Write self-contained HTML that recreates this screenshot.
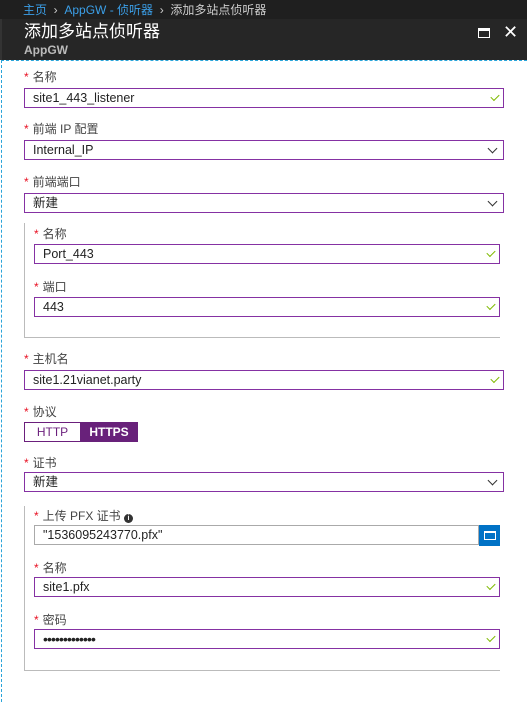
<!DOCTYPE html><html><head><meta charset="utf-8"><style>
*{margin:0;padding:0;box-sizing:border-box}
body{width:527px;height:702px;position:relative;background:#fff;font-family:"Liberation Sans","Noto Sans CJK SC",sans-serif;overflow:hidden;font-size:12px;color:#333}
.a{position:absolute}
.top{left:0;top:0;width:527px;height:19px;background:#1f1f1f;}
.hd{left:0;top:19px;width:527px;height:41px;background:#262626}
.lb{position:absolute;font-size:12px;color:#444;line-height:14px}
.lb:before{content:"*";color:#e81123;margin-right:4px;font-size:12px}
.in{position:absolute;border:1px solid #8531a3;height:20px;line-height:18px;padding-left:8px;font-size:12.5px;color:#222;background:#fff}
.ck{position:absolute;right:4px;top:5px;width:8px;height:5px;border-left:1.5px solid #7fba00;border-bottom:1.5px solid #7fba00;transform:rotate(-45deg)}
.dd{position:absolute;right:7px;top:4px;width:7px;height:7px;border-right:1px solid #333;border-bottom:1px solid #333;transform:rotate(45deg)}
</style></head><body>
<div class="a top"></div>
<div class="a" style="left:23px;top:3px;font-size:12px;line-height:14px;color:#ccc"><span style="color:#3b9fe8">主页</span> &nbsp;›&nbsp; <span style="color:#3b9fe8">AppGW - 侦听器</span> &nbsp;›&nbsp; 添加多站点侦听器</div>
<div class="a hd"></div>
<div class="a" style="left:0;top:19px;width:2px;height:41px;background:#333"></div>
<div class="a" style="left:24px;top:21px;font-size:17px;color:#fff;line-height:22px">添加多站点侦听器</div>
<div class="a" style="left:24px;top:43px;font-size:12px;color:#bbb;font-weight:bold;line-height:14px">AppGW</div>
<div class="a" style="left:478px;top:28px;width:12px;height:10px;border:1.5px solid #fff;border-top-width:3px"></div>
<div class="a" style="left:503px;top:22px;font-size:18px;color:#fff;line-height:20px">✕</div>
<div class="a" style="left:1px;top:60px;width:1px;height:642px;border-left:1px dashed #29a4d9"></div>
<div class="a" style="left:1px;top:60px;width:526px;height:1px;border-top:1px dashed #29a4d9"></div>

<div class="lb" style="left:24px;top:70px">名称</div>
<div class="in" style="left:24px;top:88px;width:480px">site1_443_listener<i class="ck"></i></div>
<div class="lb" style="left:24px;top:122px">前端 IP 配置</div>
<div class="in" style="left:24px;top:140px;width:480px">Internal_IP<i class="dd"></i></div>
<div class="lb" style="left:24px;top:175px">前端端口</div>
<div class="in" style="left:24px;top:193px;width:480px">新建<i class="dd"></i></div>

<div class="a" style="left:24px;top:223px;width:476px;height:115px;border-left:1px solid #bbb;border-bottom:1px solid #bbb"></div>
<div class="lb" style="left:34px;top:227px">名称</div>
<div class="in" style="left:34px;top:244px;width:466px">Port_443<i class="ck"></i></div>
<div class="lb" style="left:34px;top:280px">端口</div>
<div class="in" style="left:34px;top:297px;width:466px">443<i class="ck"></i></div>

<div class="lb" style="left:24px;top:352px">主机名</div>
<div class="in" style="left:24px;top:370px;width:480px">site1.21vianet.party<i class="ck"></i></div>
<div class="lb" style="left:24px;top:405px">协议</div>
<div class="a" style="left:24px;top:422px;width:114px;height:20px;border:1px solid #6b1f7c"></div>
<div class="a" style="left:24px;top:422px;width:57px;height:20px;line-height:20px;text-align:center;color:#6b1f7c">HTTP</div>
<div class="a" style="left:80px;top:422px;width:58px;height:20px;line-height:20px;text-align:center;background:#68217a;color:#fff;font-weight:bold">HTTPS</div>
<div class="lb" style="left:24px;top:456px">证书</div>
<div class="in" style="left:24px;top:472px;width:480px">新建<i class="dd"></i></div>

<div class="a" style="left:24px;top:506px;width:476px;height:165px;border-left:1px solid #bbb;border-bottom:1px solid #bbb"></div>
<div class="lb" style="left:34px;top:509px">上传 PFX 证书 <span style="display:inline-block;width:9px;height:9px;border-radius:50%;background:#333;color:#fff;font-size:7px;line-height:9px;text-align:center;font-weight:bold;vertical-align:0">i</span></div>
<div class="in" style="left:34px;top:525px;width:445px;border-color:#aaa">"1536095243770.pfx"</div>
<div class="a" style="left:479px;top:525px;width:21px;height:21px;background:#0072c6"></div>
<div class="a" style="left:484px;top:531px;width:12px;height:9px;border:1.5px solid #fff;border-top-width:2.5px"></div>
<div class="lb" style="left:34px;top:561px">名称</div>
<div class="in" style="left:34px;top:577px;width:466px">site1.pfx<i class="ck"></i></div>
<div class="lb" style="left:34px;top:613px">密码</div>
<div class="in" style="left:34px;top:629px;width:466px;font-size:14px;letter-spacing:-0.9px">•••••••••••••<i class="ck"></i></div>
</body></html>
